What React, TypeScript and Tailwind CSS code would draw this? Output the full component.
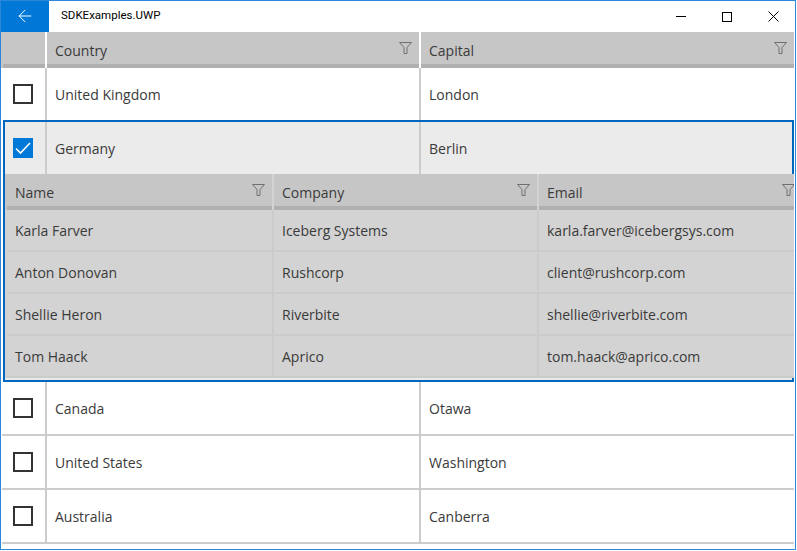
import { ArrowLeft } from 'lucide-react'

const FONT = "font-['Open_Sans','Noto_Sans',sans-serif]"

const outerBottom = [
  { country: 'Canada', capital: 'Otawa' },
  { country: 'United States', capital: 'Washington' },
  { country: 'Australia', capital: 'Canberra' },
]
const people = [
  { name: 'Karla Farver', company: 'Iceberg Systems', email: 'karla.farver@icebergsys.com' },
  { name: 'Anton Donovan', company: 'Rushcorp', email: 'client@rushcorp.com' },
  { name: 'Shellie Heron', company: 'Riverbite', email: 'shellie@riverbite.com' },
  { name: 'Tom Haack', company: 'Aprico', email: 'tom.haack@aprico.com' },
]

function FilterIcon() {
  return (
    <svg width="13" height="12" viewBox="0 0 13 12" fill="none" stroke="#707070" className="-mt-[5px] shrink-0">
      <path d="M.5.5h12L8 5.5v6H5v-6z" />
    </svg>
  )
}

function Checkbox({ checked }: { checked?: boolean }) {
  if (checked) {
    return (
      <div className="flex h-5 w-5 items-center justify-center bg-[#0078d7]">
        <svg width="16" height="14" viewBox="0 0 16 14" fill="none" stroke="white" strokeWidth="1.6">
          <path d="M1 7.5L5.5 12L15 2" />
        </svg>
      </div>
    )
  }
  return <div className="h-5 w-5 border-2 border-[#333333]" />
}

function HeaderCell({
  label,
  className,
  sepClass,
  padClass = 'pl-2 pr-[7px]',
}: {
  label?: string
  className: string
  sepClass?: string
  padClass?: string
}) {
  return (
    <div className={`flex flex-col ${className}`}>
      <div className={`flex h-8 items-center justify-between pt-1 ${padClass}`}>
        {label && <span>{label}</span>}
        {label && <FilterIcon />}
      </div>
      <div className={`h-1 bg-[#b0b0b0] ${sepClass ?? ''}`} />
    </div>
  )
}

function CountryCells({ country, capital }: { country: string; capital: string }) {
  return (
    <>
      <div className="flex w-[374px] shrink-0 items-center border-l-2 border-[#cccccc] pl-2">{country}</div>
      <div className="flex flex-1 items-center border-l-2 border-[#cccccc] pl-2">{capital}</div>
    </>
  )
}

function Row({ country, capital }: { country: string; capital: string }) {
  return (
    <div className="flex flex-col">
      <div className="flex h-[52px]">
        <div className="flex w-[44px] shrink-0 items-center pl-[12px]">
          <Checkbox />
        </div>
        <CountryCells country={country} capital={capital} />
      </div>
      <div className="ml-px h-[2px] bg-[#cccccc]" />
    </div>
  )
}

function NestedRow({ name, company, email }: { name: string; company: string; email: string }) {
  return (
    <div className="flex h-[42px] flex-col">
      <div className="flex h-10">
        <div className="flex w-[267px] shrink-0 items-center pl-[10px]">{name}</div>
        <div className="flex w-[265px] shrink-0 items-center border-l-2 border-[#cbcbcb] pl-2">{company}</div>
        <div className="flex flex-1 items-center border-l-2 border-[#cbcbcb] pl-2">{email}</div>
      </div>
      <div className="ml-[2px] h-[2px] bg-[#cbcbcb]" />
    </div>
  )
}

export default function App() {
  return (
    <div className={`h-[551px] w-[797px] overflow-hidden bg-white text-[14px] text-[#3a3a3a] ${FONT}`}>
      <div className="flex h-[550px] w-[796px] flex-col border border-[#2b88d8]">
        {/* title bar */}
        <div className="flex h-[31px] shrink-0 items-center bg-white">
          <div className="flex h-full w-[48px] items-center justify-center bg-[#0078d7]">
            <ArrowLeft size={20} strokeWidth={1.2} color="white" className="mb-[2px]" />
          </div>
          <span className="mb-[2px] ml-3 font-['Roboto',sans-serif] text-[11.5px] text-black">SDKExamples.UWP</span>
          <div className="-mr-px ml-auto flex h-full items-center text-black">
            <div className="flex h-full w-[46px] items-center justify-center">
              <div className="h-px w-[10px] bg-black" />
            </div>
            <div className="flex h-full w-[46px] items-center justify-center">
              <div className="h-[10px] w-[10px] border border-black" />
            </div>
            <div className="flex h-full w-[46px] items-center justify-center">
              <svg width="11" height="11" viewBox="0 0 11 11" stroke="black" strokeWidth="1">
                <path d="M.5.5l10 10M10.5.5l-10 10" />
              </svg>
            </div>
          </div>
        </div>

        {/* outer grid */}
        <div className="flex flex-1 flex-col pr-px">
          <div className="flex h-9 shrink-0 bg-[#c6c6c6]">
            <HeaderCell className="w-[44px] shrink-0" sepClass="ml-[2px]" />
            <HeaderCell label="Country" className="w-[374px] shrink-0 border-l-2 border-white" />
            <HeaderCell label="Capital" className="flex-1 border-l-2 border-white" />
          </div>

          <div className="flex h-[52px] shrink-0">
            <div className="flex w-[44px] shrink-0 items-center pl-[12px]">
              <Checkbox />
            </div>
            <CountryCells country="United Kingdom" capital="London" />
          </div>

          {/* selected row with details */}
          <div className="ml-[2px] flex h-[262px] shrink-0 flex-col border-2 border-[#0067c0] bg-[#ebebeb]">
            <div className="flex h-[52px] shrink-0">
              <div className="flex w-[40px] shrink-0 items-center pl-2">
                <Checkbox checked />
              </div>
              <CountryCells country="Germany" capital="Berlin" />
            </div>
            <div className="-mr-[2px] overflow-hidden bg-[#d3d3d3]">
              <div className="flex h-9 bg-[#c6c6c6]">
                <HeaderCell
                  label="Name"
                  className="w-[267px] shrink-0"
                  sepClass="ml-[2px]"
                  padClass="pl-[10px] pr-[7px]"
                />
                <HeaderCell label="Company" className="w-[265px] shrink-0 border-l-2 border-[#d3d3d3]" />
                <HeaderCell label="Email" className="flex-1 border-l-2 border-[#d3d3d3]" padClass="-mr-px pl-2" />
              </div>
              {people.map((p) => (
                <NestedRow key={p.name} {...p} />
              ))}
            </div>
          </div>

          {outerBottom.map((r) => (
            <Row key={r.country} {...r} />
          ))}
        </div>
      </div>
    </div>
  )
}
